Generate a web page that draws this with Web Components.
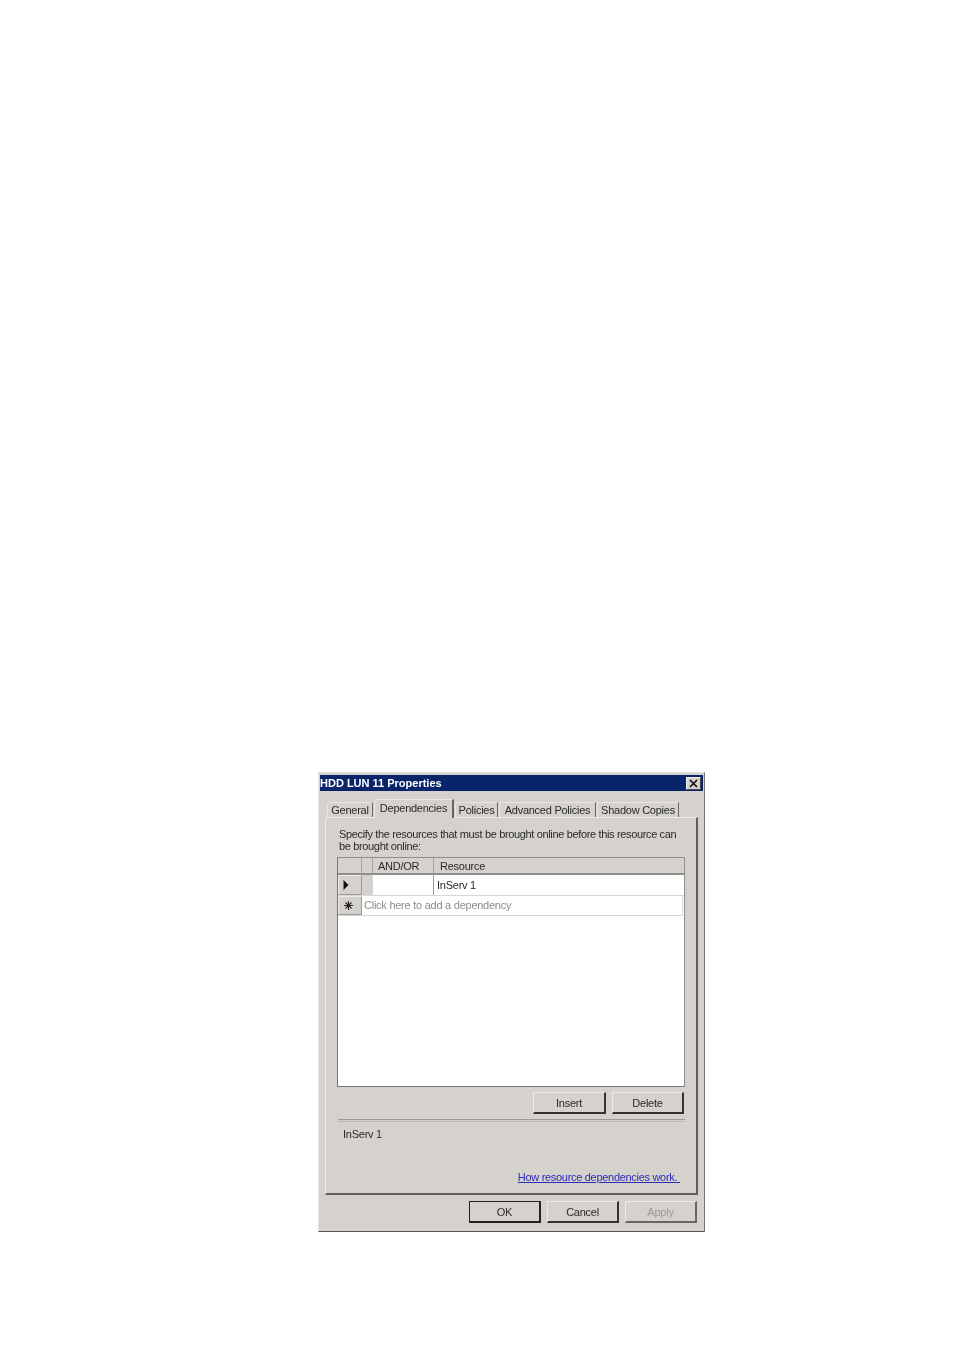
<!DOCTYPE html>
<html>
<head>
<meta charset="utf-8">
<style>
  html, body { margin: 0; background: #fff; }
  body { font: 11px "Liberation Sans", Arial, sans-serif; letter-spacing: -0.25px; color: #2a2a2a; }
  #page { display: flex; flex-direction: column; align-items: flex-start; min-height: 1350px; box-sizing: border-box; padding: 772px 0 0 318px; }
</style>
</head>
<body>
<div id="page">
<prop-dialog heading="HDD LUN 11 Properties">
  <tab-strip></tab-strip>
  <tab-panel>
    <div style="padding:10px 0 0 13px;width:345px;line-height:12px;letter-spacing:-.35px">Specify the resources that must be brought online before this resource can be brought online:</div>
    <dep-grid></dep-grid>
    <div style="display:flex;justify-content:flex-end;gap:6px;margin:5px 12px 0 0">
      <win-button style="width:73px">Insert</win-button>
      <win-button style="width:72px">Delete</win-button>
    </div>
    <div style="margin:5px 11px 0 12px;height:3px;border-top:1px solid #9b9a96;border-bottom:1px solid #b8b6b1;box-sizing:border-box"></div>
    <div style="padding:5px 0 0 17px;line-height:14px">InServ 1</div>
    <div style="padding:29px 16px 0 0;text-align:right;line-height:14px"><a style="color:#2b2bb8;text-decoration:underline;letter-spacing:-.3px">How resource dependencies work.&nbsp;</a></div>
  </tab-panel>
  <div slot="footer" style="display:flex;justify-content:flex-end;gap:6px;padding:6px 7px 0 0">
    <win-button style="width:72px" default>OK</win-button>
    <win-button style="width:72px">Cancel</win-button>
    <win-button style="width:72px" disabled>Apply</win-button>
  </div>
</prop-dialog>
</div>

<script>
class PropDialog extends HTMLElement {
  constructor() {
    super();
    this.attachShadow({ mode: "open" }).innerHTML = `
      <style>
        :host { display: block; width: 387px; height: 460px; box-sizing: border-box; background: #d5d2cd; filter: blur(.3px);
          border-top: 1px solid #e4e2de; border-right: 1px solid #77767a; border-bottom: 1px solid #55555a; border-left: 1px solid #e4e2de; padding: 2px 0 0 1px; }
        .title { height: 16px; margin-right: 1px; background: #0a246a; color: #fff; display: flex; align-items: center; justify-content: space-between; font-weight: bold; line-height: 16px; letter-spacing: 0; }
        .close { width: 15px; height: 13px; margin-right: 2px; background: #d5d2cd; border: 1px solid; border-color: #eee #444 #444 #eee; box-sizing: border-box; display: flex; align-items: center; justify-content: center; }
      </style>
      <div class="title"><span id="heading"></span>
        <span class="close"><svg width="9" height="9" viewBox="0 0 9 9"><path d="M1 1l7 7M8 1l-7 7" stroke="#111" stroke-width="1.7" fill="none"/></svg></span>
      </div>
      <slot></slot>
      <slot name="footer"></slot>`;
  }
  connectedCallback() {
    this.shadowRoot.getElementById("heading").textContent = this.getAttribute("heading");
  }
}
customElements.define("prop-dialog", PropDialog);

class TabStrip extends HTMLElement {
  constructor() {
    super();
    const tabs = [["General", 46], ["Dependencies", 80, true], ["Policies", 43], ["Advanced Policies", 97], ["Shadow Copies", 82]];
    this.attachShadow({ mode: "open" }).innerHTML = `
      <style>
        :host { display: flex; align-items: flex-end; height: 27px; padding-left: 7px; margin-bottom: -1px; position: relative; z-index: 1; }
        .tab { height: 15px; line-height: 15px; text-align: center; box-sizing: border-box; border-top: 1px solid #e8e6e2; border-left: 1px solid #e8e6e2; border-right: 1px solid #66666a; border-top-left-radius: 2px; white-space: nowrap; margin: 0 1px 1px 0; }
        .on { height: 19px; line-height: 16px; margin: 0 1px 0 0; background: #d5d2cd; border-right-width: 2px; }
      </style>
      ${tabs.map(t => `<div class="tab ${t[2] ? "on" : ""}" style="width:${t[1]}px">${t[0]}</div>`).join("")}`;
  }
}
customElements.define("tab-strip", TabStrip);

class TabPanel extends HTMLElement {
  constructor() {
    super();
    this.attachShadow({ mode: "open" }).innerHTML = `
      <style>
        :host { display: block; width: 373px; height: 378px; margin-left: 5px; box-sizing: border-box;
          border-top: 1px solid #eceae6; border-left: 1px solid #eceae6; border-right: 2px solid #5f5f62; border-bottom: 2px solid #5f5f62; }
      </style>
      <slot></slot>`;
  }
}
customElements.define("tab-panel", TabPanel);

class DepGrid extends HTMLElement {
  constructor() {
    super();
    this.attachShadow({ mode: "open" }).innerHTML = `
      <style>
        :host { display: block; margin: 5px 11px 0 11px; height: 230px; box-sizing: border-box; background: #fff; border: 1px solid #77767a; border-color: #8f8e8b #8f8e8b #77767a #77767a; }
        .row { display: grid; grid-template-columns: 24px 11px 61px 1fr; box-sizing: border-box; }
        .row > div { box-sizing: border-box; line-height: 15px; white-space: nowrap; }
        .head { height: 17px; background: #d5d2cd; border-bottom: 2px solid #8f8e8b; }
        .head > div { border-right: 1px solid #a3a29e; padding-top: 1px; }
        .head > div:last-child { border-right: 0; padding-left: 6px; }
        .head .c { padding-left: 5px; }
        .hdr { background: #d5d2cd; display: flex; align-items: center; padding-left: 4px; border-right: 1px solid #9b9a96; border-bottom: 1px solid #9b9a96; border-top: 1px solid #ecebe8; border-left: 1px solid #ecebe8; }
        .r1 { height: 21px; border-bottom: 1px solid #d8d7d4; }
        .r1 > div { line-height: 20px; }
        .r1 .g { background: #d5d2cd; }
        .r1 .c { border-right: 1px solid #9b9a96; }
        .r1 .v { padding-left: 3px; }
        .r2 { height: 20px; grid-template-columns: 24px 1fr; border-bottom: 1px solid #d8d7d4; margin-right: 1px; border-right: 1px solid #d8d7d4; }
        .r2 .hint { color: #8c8c8c; padding-left: 2px; line-height: 19px; }
      </style>
      <div class="row head"><div></div><div></div><div class="c">AND/OR</div><div>Resource</div></div>
      <div class="row r1">
        <div class="hdr"><svg width="6" height="10" viewBox="0 0 6 10"><path d="M0.5 0v10L5.5 5z" fill="#111"/></svg></div>
        <div class="g"></div><div class="c"></div><div class="v">InServ 1</div>
      </div>
      <div class="row r2">
        <div class="hdr"><svg width="11" height="11" viewBox="0 0 11 11"><path d="M5.5 1v9M1 5.5h9M2.5 2.5l6 6M8.5 2.5l-6 6" stroke="#222" stroke-width="1.1" fill="none"/></svg></div>
        <div class="hint">Click here to add a dependency</div>
      </div>`;
  }
}
customElements.define("dep-grid", DepGrid);

class WinButton extends HTMLElement {
  constructor() {
    super();
    this.attachShadow({ mode: "open" }).innerHTML = `
      <style>
        :host { display: flex; align-items: center; justify-content: center; height: 22px; box-sizing: border-box; background: #d5d2cd;
          border-top: 1px solid #eceae6; border-left: 1px solid #eceae6; border-right: 2px solid #333; border-bottom: 2px solid #333; }
        :host([default]) { border: 1px solid #222; border-right-width: 2px; border-bottom-width: 2px; }
        :host([disabled]) { color: #9c9a96; border-right-color: #66666a; border-bottom-color: #66666a; }
      </style>
      <slot></slot>`;
  }
}
customElements.define("win-button", WinButton);
</script>
</body>
</html>
